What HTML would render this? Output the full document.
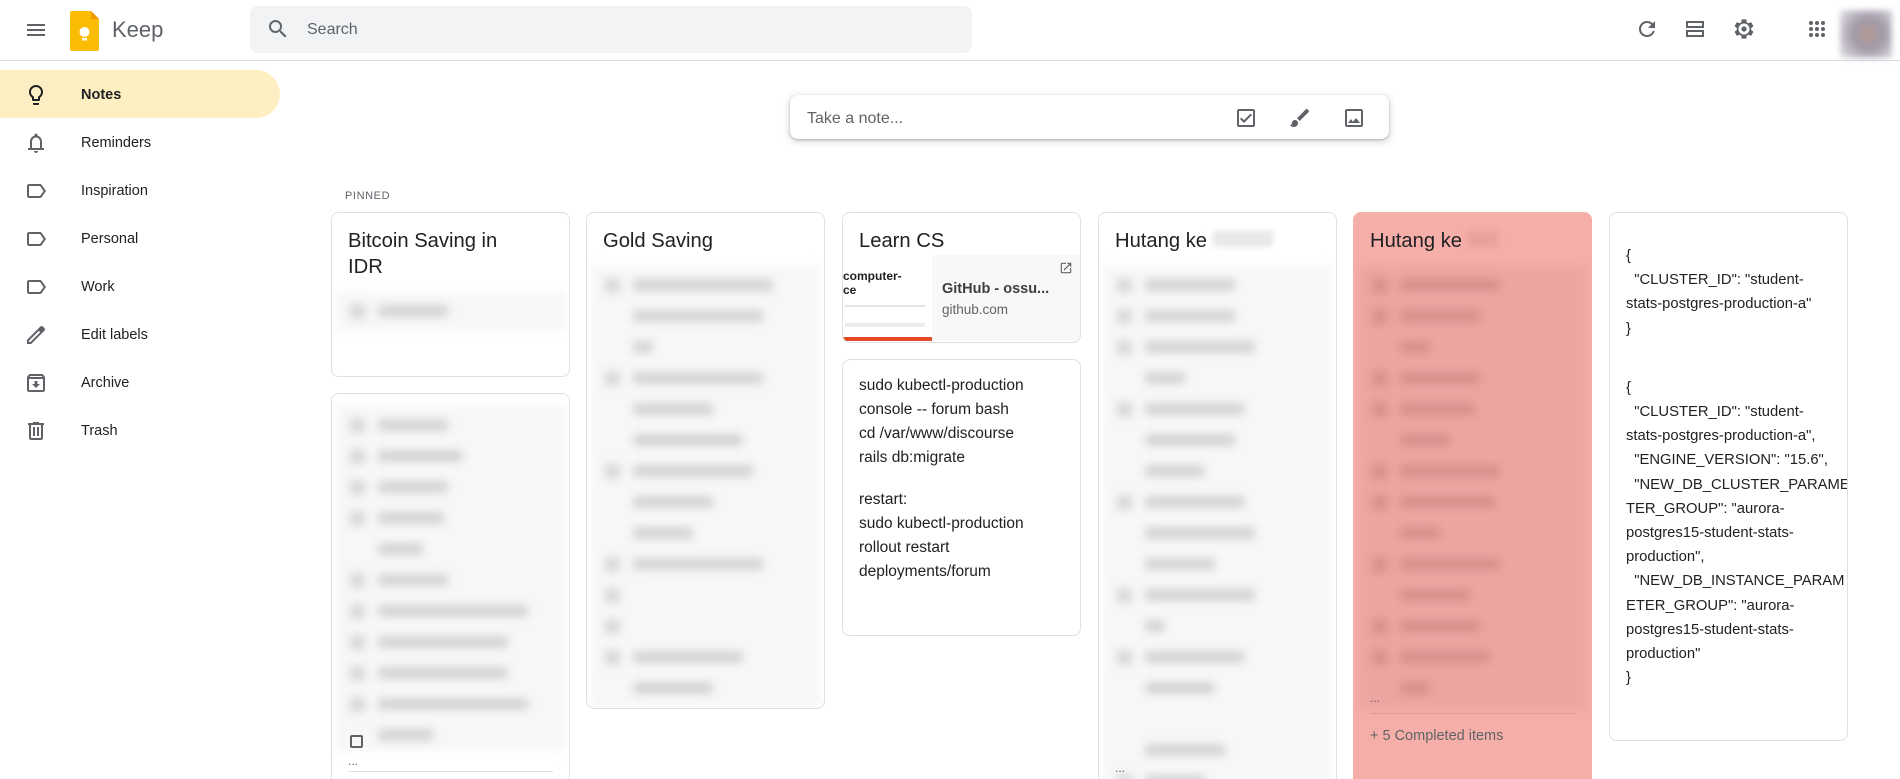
<!DOCTYPE html>
<html style="overflow:hidden"><head><meta charset="utf-8">
<style>
*{box-sizing:border-box;margin:0;padding:0}
html,body{width:1900px;height:779px;overflow:hidden}
body{background:#fff;font-family:"Liberation Sans",Arial,sans-serif;color:#202124;position:relative}
.abs{position:absolute}
.hdr{left:0;top:0;width:1900px;height:61px;border-bottom:1px solid #dadce0}
.search{left:250px;top:6px;width:722px;height:47px;background:#f1f3f4;border-radius:8px}
.nav{left:0;width:280px;height:48px;display:flex;align-items:center}
.nav span{position:absolute;left:81px;font-size:14.5px;color:#202124}
.nav svg{position:absolute;left:24px}
.card{position:absolute;width:239px;border:1px solid #e0e0e0;border-radius:8px;background:#fff;overflow:hidden}
.title{font-size:20.2px;padding:15px 16px 0 16px;line-height:26px;color:#202124}
.blur{filter:blur(4.5px);background:#f7f7f7;margin-left:4px;margin-right:4px}
.pink .blur{background:#eea5a1}
.row{position:relative;height:31px}
.row .cb{position:absolute;left:14px;top:8px;width:15px;height:15px;background:#d8d8d8}
.row .t{position:absolute;left:42px;top:9px;height:12px;background:#d4d4d4;border-radius:3px}
.pink .row .cb{background:#d98f8c}.pink .row .t{background:#d98f8c}
.txt{font-size:15.5px;line-height:24px;padding:14px 16px;color:#202124;white-space:nowrap}
</style></head><body>
<div class="abs hdr"></div>
<svg class="abs" style="left:24px;top:18px" width="24" height="24" viewBox="0 0 24 24"><path d="M3 18h18v-2H3v2zm0-5h18v-2H3v2zm0-7v2h18V6H3z" fill="#5f6368"/></svg>
<svg class="abs" style="left:70px;top:11px" width="29" height="40" viewBox="0 0 29 40"><path d="M0 2a2 2 0 0 1 2-2h19l8 8v30a2 2 0 0 1-2 2H2a2 2 0 0 1-2-2z" fill="#fbbc04"/><path d="M21 0l8 8h-8z" fill="#f29900"/><circle cx="14.5" cy="21" r="5" fill="#fff"/><rect x="12" y="27" width="5" height="2.5" fill="#fff"/></svg>
<div class="abs" style="left:112px;top:17px;font-size:22px;color:#5f6368">Keep</div>
<div class="abs search"></div>
<svg class="abs" style="left:266px;top:17px" width="24" height="24" viewBox="0 0 24 24"><path d="M15.5 14h-.79l-.28-.27A6.47 6.47 0 0 0 16 9.5 6.5 6.5 0 1 0 9.5 16c1.61 0 3.09-.59 4.23-1.57l.27.28v.79l5 4.99L20.49 19l-4.99-5zm-6 0C7.01 14 5 11.99 5 9.5S7.01 5 9.5 5 14 7.01 14 9.5 11.99 14 9.5 14z" fill="#5f6368"/></svg>
<div class="abs" style="left:307px;top:21px;font-size:16px;color:#5f6368">Search</div>
<svg class="abs" style="left:1635px;top:17px" width="24" height="24" viewBox="0 0 24 24"><path d="M17.65 6.35A7.96 7.96 0 0 0 12 4a8 8 0 1 0 7.73 10h-2.08A6 6 0 1 1 12 6c1.66 0 3.14.69 4.22 1.78L13 11h7V4l-2.35 2.35z" fill="#5f6368"/></svg>
<svg class="abs" style="left:1683px;top:17px" width="24" height="24" viewBox="0 0 24 24"><path d="M3 4h18v7H3zM5 6v3h14V6zM3 13h18v7H3zm2 2v3h14v-3z" fill="#5f6368"/></svg>
<svg class="abs" style="left:1732px;top:17px" width="24" height="24" viewBox="0 0 24 24"><path fill-rule="evenodd" d="M19.14 12.94c.04-.3.06-.61.06-.94 0-.32-.02-.64-.07-.94l2.03-1.58a.49.49 0 0 0 .12-.61l-1.92-3.32a.488.488 0 0 0-.59-.22l-2.39.96c-.5-.38-1.03-.7-1.62-.94l-.36-2.54a.484.484 0 0 0-.48-.41h-3.84c-.24 0-.43.17-.47.41l-.36 2.54c-.59.24-1.13.57-1.62.94l-2.39-.96c-.22-.08-.47 0-.59.22L2.74 8.87c-.12.21-.08.47.12.61l2.03 1.58c-.05.3-.09.63-.09.94s.02.64.07.94l-2.03 1.58a.49.49 0 0 0-.12.61l1.92 3.32c.12.22.37.29.59.22l2.39-.96c.5.38 1.03.7 1.62.94l.36 2.54c.05.24.24.41.48.41h3.84c.24 0 .44-.17.47-.41l.36-2.54c.59-.24 1.13-.56 1.62-.94l2.39.96c.22.08.47 0 .59-.22l1.92-3.32c.12-.22.07-.47-.12-.61l-2.01-1.58zM12 17.5a5.5 5.5 0 1 1 0-11 5.5 5.5 0 0 1 0 11z" fill="#5f6368"/><circle cx="12" cy="12" r="2.6" fill="#5f6368"/></svg>
<svg class="abs" style="left:1805px;top:17px" width="24" height="24" viewBox="0 0 24 24" fill="#5f6368"><circle cx="6" cy="6" r="2"/><circle cx="12" cy="6" r="2"/><circle cx="18" cy="6" r="2"/><circle cx="6" cy="12" r="2"/><circle cx="12" cy="12" r="2"/><circle cx="18" cy="12" r="2"/><circle cx="6" cy="18" r="2"/><circle cx="12" cy="18" r="2"/><circle cx="18" cy="18" r="2"/></svg>
<div class="abs" style="left:1840px;top:10px;width:52px;height:48px;background:radial-gradient(circle at 55% 50%,#b49a92 0,#a19aa8 40%,#e6e4ea 100%);filter:blur(3px)"></div>

<div class="abs" style="left:0;top:70px;width:280px;height:48px;background:#feefc3;border-radius:0 24px 24px 0"></div>
<div class="abs nav" style="top:71px"><svg width="24" height="24" viewBox="0 0 24 24"><path d="M9 21c0 .55.45 1 1 1h4c.55 0 1-.45 1-1v-1H9v1zm3-19C8.14 2 5 5.14 5 9c0 2.38 1.19 4.47 3 5.74V17c0 .55.45 1 1 1h6c.55 0 1-.45 1-1v-2.26c1.81-1.27 3-3.36 3-5.74 0-3.86-3.14-7-7-7zm2 11.7V16h-4v-2.3C8.48 12.630 7 11.53 7 9c0-2.76 2.24-5 5-5s5 2.24 5 5c0 2.49-1.51 3.65-3 4.7z" fill="#202124"/></svg><span style="font-weight:bold">Notes</span></div>
<div class="abs nav" style="top:119px"><svg width="24" height="24" viewBox="0 0 24 24"><path d="M18 17v-6c0-3.07-1.64-5.64-4.5-6.32V4c0-.83-.67-1.5-1.5-1.5s-1.5.67-1.5 1.5v.68C7.63 5.36 6 7.92 6 11v6H4v2h16v-2h-2zm-2 0H8v-6c0-2.48 1.51-4.5 4-4.5s4 2.02 4 4.5v6zm-4 5c1.1 0 2-.9 2-2h-4c0 1.1.9 2 2 2z" fill="#5f6368"/></svg><span>Reminders</span></div>
<div class="abs nav" style="top:167px"><svg width="24" height="24" viewBox="0 0 24 24"><path d="M17.63 5.84C17.27 5.33 16.67 5 16 5L5 5.01C3.9 5.01 3 5.9 3 7v10c0 1.1.9 1.99 2 1.99L16 19c.67 0 1.27-.33 1.63-.84L22 12l-4.37-6.16zM16 17H5V7h11l3.55 5L16 17z" fill="#5f6368"/></svg><span>Inspiration</span></div>
<div class="abs nav" style="top:215px"><svg width="24" height="24" viewBox="0 0 24 24"><path d="M17.63 5.84C17.27 5.33 16.67 5 16 5L5 5.01C3.9 5.01 3 5.9 3 7v10c0 1.1.9 1.99 2 1.99L16 19c.67 0 1.27-.33 1.63-.84L22 12l-4.37-6.16zM16 17H5V7h11l3.55 5L16 17z" fill="#5f6368"/></svg><span>Personal</span></div>
<div class="abs nav" style="top:263px"><svg width="24" height="24" viewBox="0 0 24 24"><path d="M17.63 5.84C17.27 5.33 16.67 5 16 5L5 5.01C3.9 5.01 3 5.9 3 7v10c0 1.1.9 1.99 2 1.99L16 19c.67 0 1.27-.33 1.63-.84L22 12l-4.37-6.16zM16 17H5V7h11l3.55 5L16 17z" fill="#5f6368"/></svg><span>Work</span></div>
<div class="abs nav" style="top:311px"><svg width="24" height="24" viewBox="0 0 24 24"><path d="M20.41 4.94l-1.35-1.35c-.78-.78-2.05-.78-2.83 0L3 16.82V21h4.18L20.41 7.77c.79-.78.79-2.05 0-2.83zm-14 14.12L5 19v-1.36l9.82-9.82 1.41 1.41-9.82 9.83z" fill="#5f6368"/></svg><span>Edit labels</span></div>
<div class="abs nav" style="top:359px"><svg width="24" height="24" viewBox="0 0 24 24"><path d="M20.54 5.23l-1.39-1.68C18.88 3.21 18.47 3 18 3H6c-.47 0-.88.21-1.16.55L3.46 5.23C3.17 5.57 3 6.02 3 6.5V19c0 1.1.9 2 2 2h14c1.1 0 2-.9 2-2V6.5c0-.48-.17-.93-.46-1.27zM6.24 5h11.52l.81.97H5.44l.8-.97zM5 19V8h14v11H5zm8.45-9h-2.9v3H8l4 4 4-4h-2.55z" fill="#5f6368"/></svg><span>Archive</span></div>
<div class="abs nav" style="top:407px"><svg width="24" height="24" viewBox="0 0 24 24"><path d="M15 4V3H9v1H4v2h1v13c0 1.1.9 2 2 2h10c1.1 0 2-.9 2-2V6h1V4h-5zm2 15H7V6h10v13zM9 8h2v9H9zm4 0h2v9h-2z" fill="#5f6368"/></svg><span>Trash</span></div>

<div class="abs" style="left:790px;top:95px;width:599px;height:44px;border-radius:8px;box-shadow:0 1px 2px 0 rgba(60,64,67,.3),0 2px 6px 2px rgba(60,64,67,.15);background:#fff"></div>
<div class="abs" style="left:807px;top:110px;font-size:16px;color:#5f6368">Take a note...</div>
<svg class="abs" style="left:1234px;top:106px" width="24" height="24" viewBox="0 0 24 24"><path d="M19 3H5c-1.1 0-2 .9-2 2v14c0 1.1.9 2 2 2h14c1.1 0 2-.9 2-2V5c0-1.1-.9-2-2-2zm0 16H5V5h14v14zM17.99 9l-1.41-1.42-6.59 6.59-2.58-2.57-1.42 1.41 4 3.99z" fill="#5f6368"/></svg>
<svg class="abs" style="left:1288px;top:106px" width="24" height="24" viewBox="0 0 24 24"><path d="M7 14c-1.66 0-3 1.34-3 3 0 1.31-1.16 2-2 2 .92 1.22 2.49 2 4 2 2.21 0 4-1.79 4-4 0-1.66-1.34-3-3-3zm13.71-9.37l-1.34-1.34a.996.996 0 0 0-1.41 0L9 12.25 11.75 15l8.96-8.96a.996.996 0 0 0 0-1.41z" fill="#5f6368"/></svg>
<svg class="abs" style="left:1342px;top:106px" width="24" height="24" viewBox="0 0 24 24"><path d="M19 3H5c-1.1 0-2 .9-2 2v14c0 1.1.9 2 2 2h14c1.1 0 2-.9 2-2V5c0-1.1-.9-2-2-2zm0 16H5V5h14v14zm-5-7l-3 3.72L9 13l-3 4h12l-4-5z" fill="#5f6368"/></svg>

<div class="abs" style="left:345px;top:190px;font-size:11px;letter-spacing:.6px;color:#5f6368">PINNED</div>

<!-- col1 -->
<div class="card" style="left:331px;top:212px;height:165px">
 <div class="title">Bitcoin Saving in<br>IDR</div>
 <div class="blur" style="margin-top:12px;padding:4px 0"><div class="row"><div class="cb"></div><div class="t" style="width:70px"></div></div></div>
</div>
<div class="card" style="left:331px;top:393px;height:386px;border-bottom:none;border-radius:8px 8px 0 0">
 <div class="blur" style="margin-top:12px;padding-top:4px">
  <div class="row"><div class="cb"></div><div class="t" style="width:70px"></div></div>
  <div class="row"><div class="cb"></div><div class="t" style="width:85px"></div></div>
  <div class="row"><div class="cb"></div><div class="t" style="width:70px"></div></div>
  <div class="row"><div class="cb"></div><div class="t" style="width:66px"></div></div>
  <div class="row"><div class="t" style="width:45px"></div></div>
  <div class="row"><div class="cb"></div><div class="t" style="width:70px"></div></div>
  <div class="row"><div class="cb"></div><div class="t" style="width:150px"></div></div>
  <div class="row"><div class="cb"></div><div class="t" style="width:130px"></div></div>
  <div class="row"><div class="cb"></div><div class="t" style="width:130px"></div></div>
  <div class="row"><div class="cb"></div><div class="t" style="width:150px"></div></div>
  <div class="row"><div class="t" style="width:55px"></div></div>
 </div>
 <div style="position:absolute;left:18px;top:341px;width:13px;height:13px;border:2px solid #5f6368;border-radius:2px"></div>
 <div style="position:absolute;left:16px;top:360px;font-size:12px;color:#5f6368">...</div>
 <div style="position:absolute;left:16px;right:16px;top:377px;border-top:1px solid #e0e0e0"></div>
</div>

<!-- col2 -->
<div class="card" style="left:586px;top:212px;height:497px">
 <div class="title">Gold Saving</div>
 <div class="blur" style="margin-top:12px;padding:4px 0">
  <div class="row"><div class="cb"></div><div class="t" style="width:140px"></div></div>
  <div class="row"><div class="t" style="width:130px"></div></div>
  <div class="row"><div class="t" style="width:20px"></div></div>
  <div class="row"><div class="cb"></div><div class="t" style="width:130px"></div></div>
  <div class="row"><div class="t" style="width:80px"></div></div>
  <div class="row"><div class="t" style="width:110px"></div></div>
  <div class="row"><div class="cb"></div><div class="t" style="width:120px"></div></div>
  <div class="row"><div class="t" style="width:80px"></div></div>
  <div class="row"><div class="t" style="width:60px"></div></div>
  <div class="row"><div class="cb"></div><div class="t" style="width:130px"></div></div>
  <div class="row"><div class="cb"></div></div>
  <div class="row"><div class="cb"></div></div>
  <div class="row"><div class="cb"></div><div class="t" style="width:110px"></div></div>
  <div class="row"><div class="t" style="width:80px"></div></div>
 </div>
</div>

<!-- col3 -->
<div class="card" style="left:842px;top:212px;height:131px">
 <div class="title">Learn CS</div>
 <div style="position:absolute;left:0;top:42px;width:237px;height:86px;background:#f8f8f8"></div>
 <div style="position:absolute;left:0;top:42px;width:89px;height:86px;background:#fff;overflow:hidden">
  <div style="position:absolute;left:0;top:14px;font-size:12px;font-weight:bold;line-height:14px">computer-<br>ce</div>
  <div style="position:absolute;left:2px;top:50px;width:80px;height:2px;background:#e4e4e4"></div>
  <div style="position:absolute;left:2px;top:68px;width:80px;height:4px;background:#ececec"></div>
  <div style="position:absolute;left:0;top:82px;width:89px;height:4px;background:#e34c26"></div>
 </div>
 <div style="position:absolute;left:99px;top:68px;font-size:14.5px;font-weight:bold;color:#3c4043">GitHub - ossu...</div>
 <div style="position:absolute;left:99px;top:89px;font-size:13.5px;color:#5f6368">github.com</div>
 <svg style="position:absolute;left:216px;top:48px" width="14" height="14" viewBox="0 0 24 24"><path d="M19 19H5V5h7V3H5a2 2 0 0 0-2 2v14a2 2 0 0 0 2 2h14c1.1 0 2-.9 2-2v-7h-2v7zM14 3v2h3.59l-9.83 9.83 1.41 1.41L19 6.41V10h2V3h-7z" fill="#5f6368"/></svg>
</div>
<div class="card" style="left:842px;top:359px;height:277px">
 <div class="txt">sudo kubectl-production<br>console -- forum bash<br>cd /var/www/discourse<br>rails db:migrate<div style="height:18px"></div>restart:<br>sudo kubectl-production<br>rollout restart<br>deployments/forum</div>
</div>

<!-- col4 -->
<div class="card" style="left:1098px;top:212px;height:567px;border-bottom:none;border-radius:8px 8px 0 0">
 <div class="title">Hutang ke <span style="display:inline-block;width:60px;height:16px;background:#e8e8e8;filter:blur(3px)"></span></div>
 <div class="blur" style="margin-top:12px;padding:4px 0">
  <div class="row"><div class="cb"></div><div class="t" style="width:90px"></div></div>
  <div class="row"><div class="cb"></div><div class="t" style="width:90px"></div></div>
  <div class="row"><div class="cb"></div><div class="t" style="width:110px"></div></div>
  <div class="row"><div class="t" style="width:40px"></div></div>
  <div class="row"><div class="cb"></div><div class="t" style="width:100px"></div></div>
  <div class="row"><div class="t" style="width:90px"></div></div>
  <div class="row"><div class="t" style="width:60px"></div></div>
  <div class="row"><div class="cb"></div><div class="t" style="width:100px"></div></div>
  <div class="row"><div class="t" style="width:110px"></div></div>
  <div class="row"><div class="t" style="width:70px"></div></div>
  <div class="row"><div class="cb"></div><div class="t" style="width:110px"></div></div>
  <div class="row"><div class="t" style="width:20px"></div></div>
  <div class="row"><div class="cb"></div><div class="t" style="width:100px"></div></div>
  <div class="row"><div class="t" style="width:70px"></div></div>
  <div class="row"></div>
  <div class="row"><div class="t" style="width:80px"></div></div>
  <div class="row"><div class="cb"></div><div class="t" style="width:60px"></div></div>
  <div class="row"><div class="cb" style="left:30px"></div><div class="t" style="left:58px;width:80px"></div></div>
 </div>
 <div style="position:absolute;left:16px;top:548px;font-size:12px;color:#5f6368">...</div>
</div>

<!-- col5 -->
<div class="card pink" style="left:1353px;top:212px;height:567px;background:#f6aea9;border-color:#f6aea9;border-radius:8px 8px 0 0">
 <div class="title">Hutang ke <span style="display:inline-block;width:30px;height:16px;background:#eaa09c;filter:blur(3px)"></span></div>
 <div class="blur" style="margin-top:12px;padding:4px 0">
  <div class="row"><div class="cb"></div><div class="t" style="width:100px"></div></div>
  <div class="row"><div class="cb"></div><div class="t" style="width:80px"></div></div>
  <div class="row"><div class="t" style="width:30px"></div></div>
  <div class="row"><div class="cb"></div><div class="t" style="width:80px"></div></div>
  <div class="row"><div class="cb"></div><div class="t" style="width:75px"></div></div>
  <div class="row"><div class="t" style="width:50px"></div></div>
  <div class="row"><div class="cb"></div><div class="t" style="width:100px"></div></div>
  <div class="row"><div class="cb"></div><div class="t" style="width:95px"></div></div>
  <div class="row"><div class="t" style="width:40px"></div></div>
  <div class="row"><div class="cb"></div><div class="t" style="width:100px"></div></div>
  <div class="row"><div class="t" style="width:70px"></div></div>
  <div class="row"><div class="cb"></div><div class="t" style="width:80px"></div></div>
  <div class="row"><div class="cb"></div><div class="t" style="width:90px"></div></div>
  <div class="row"><div class="t" style="width:30px"></div></div>
 </div>
 <div style="position:absolute;left:16px;top:478px;font-size:12px;color:#5f6368">...</div>
 <div style="position:absolute;left:16px;right:16px;top:500px;border-top:1px solid #e39995"></div>
 <div style="position:absolute;left:16px;top:515px;font-size:14.5px;color:#5f6368">+ 5 Completed items</div>
</div>

<!-- col6 -->
<div class="card" style="left:1609px;top:212px;height:529px">
 <div class="txt" style="padding-top:31px;line-height:24.2px;font-size:14.8px">{<br>&nbsp;&nbsp;"CLUSTER_ID": "student-<br>stats-postgres-production-a"<br>}<div style="height:35px"></div>{<br>&nbsp;&nbsp;"CLUSTER_ID": "student-<br>stats-postgres-production-a",<br>&nbsp;&nbsp;"ENGINE_VERSION": "15.6",<br>&nbsp;&nbsp;"NEW_DB_CLUSTER_PARAME<br>TER_GROUP": "aurora-<br>postgres15-student-stats-<br>production",<br>&nbsp;&nbsp;"NEW_DB_INSTANCE_PARAM<br>ETER_GROUP": "aurora-<br>postgres15-student-stats-<br>production"<br>}</div>
</div>
</body></html>
